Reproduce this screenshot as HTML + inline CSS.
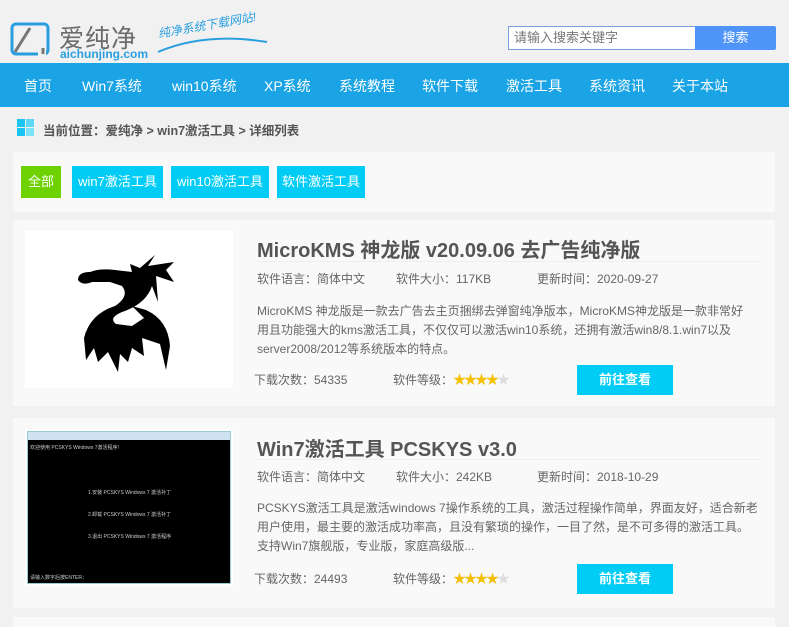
<!DOCTYPE html>
<html><head><meta charset="utf-8"><style>
*{margin:0;padding:0;box-sizing:border-box}
body{width:789px;height:620px;overflow:hidden;background:#f1f1f1;font-family:"Liberation Sans","Noto Sans CJK SC",sans-serif;position:relative;color:#555}
.a{position:absolute;white-space:nowrap}
.nav{position:absolute;left:0;top:63px;width:789px;height:44px;background:#1aa3e5}
.nav span{position:absolute;top:13px;color:#fff;font-size:14px}
.card{position:absolute;left:13px;width:762px;background:#f9f9f9}
.tag{position:absolute;top:166px;height:32px;line-height:32px;color:#fff;font-size:13px;text-align:center;background:#00ccf5}
.t{font-size:20px;font-weight:bold;color:#555}
.m{font-size:12px;color:#666}
.d{font-size:12px;color:#666;line-height:19px}
.btn{position:absolute;width:96px;height:30px;line-height:30px;background:#00ccf5;color:#fff;font-weight:bold;font-size:13px;text-align:center}
.star{font-size:13px;letter-spacing:-2px;position:relative;display:inline-block;color:#ddd}
.star b{position:absolute;left:0;top:0;width:3.5em;overflow:hidden;color:#f5c000;font-weight:normal}
</style></head><body>
<svg class="a" style="left:10px;top:22px" width="40" height="34" viewBox="0 0 40 34"><rect x="2" y="2" width="36" height="30" rx="4" fill="none" stroke="#2a9fe0" stroke-width="3"/><path d="M5 30 L20 6" stroke="#777" stroke-width="3"/><rect x="28" y="20" width="8" height="14" fill="#f1f1f1"/><path d="M33 26v6" stroke="#777" stroke-width="3"/></svg>
<div class="a" style="left:59px;top:19px;font-size:25px;color:#6b6b6b;letter-spacing:1px">爱纯净</div>
<div class="a" style="left:60px;top:47px;font-size:12px;color:#2a9fe0;font-weight:bold">aichunjing.com</div>
<div class="a" style="left:158px;top:25px;font-size:12px;color:#2a9fe0;font-style:italic;transform:rotate(-10deg);transform-origin:left">纯净系统下载网站!</div>
<svg class="a" style="left:155px;top:34px" width="115" height="20"><path d="M3 18 Q50 -2 112 8" stroke="#2a9fe0" stroke-width="2" fill="none"/></svg>
<div class="a" style="left:508px;top:26px;width:188px;height:24px;background:#fff;border:1px solid #7a9ee0;font-size:13px;color:#777;line-height:22px;padding-left:5px">请输入搜索关键字</div>
<div class="a" style="left:695px;top:26px;width:81px;height:24px;background:#4f94f8;color:#fff;font-size:13px;line-height:24px;text-align:center;border-radius:0 2px 2px 0">搜索</div>
<div class="nav"><span style="left:24px">首页</span><span style="left:82px">Win7系统</span><span style="left:172px">win10系统</span><span style="left:264px">XP系统</span><span style="left:339px">系统教程</span><span style="left:422px">软件下载</span><span style="left:506px">激活工具</span><span style="left:589px">系统资讯</span><span style="left:672px">关于本站</span></div>
<svg class="a" style="left:17px;top:119px" width="18" height="17"><rect x="0" y="0" width="8" height="8" fill="#1ac4f0"/><rect x="9" y="0" width="8" height="8" fill="#5ed8f8"/><rect x="0" y="9" width="8" height="8" fill="#1ac4f0"/><rect x="9" y="9" width="8" height="8" fill="#7de3fb"/></svg>
<div class="a" style="left:43px;top:120px;font-size:12.5px;font-weight:bold;color:#555">当前位置：爱纯净 &gt; win7激活工具 &gt; 详细列表</div>
<div class="card" style="top:152px;height:60px"></div>
<div class="tag" style="left:21px;width:40px;background:#6ed200">全部</div>
<div class="tag" style="left:72px;width:91px">win7激活工具</div>
<div class="tag" style="left:171px;width:98px">win10激活工具</div>
<div class="tag" style="left:277px;width:88px">软件激活工具</div>
<div class="card" style="top:220px;height:186px"></div>
<div class="a" style="left:25px;top:231px;width:208px;height:157px;background:#fff"></div>
<svg class="a" style="left:70px;top:250px" width="115" height="122" viewBox="0 0 115 122"><path d="M85 5 L70 18 L60 14 L62 22 L45 20 Q30 18 20 22 Q8 22 8 30 Q12 36 22 32 L40 32 L52 36 Q60 46 45 56 Q20 64 14 88 L16 110 L24 98 L28 112 L38 102 L48 122 L50 104 L58 112 L62 98 L74 106 L72 88 L90 94 L96 120 L100 96 Q98 70 76 60 L62 56 L74 68 L62 76 L46 74 Q38 68 52 62 Q76 54 82 36 L88 52 L86 26 L104 32 L96 20 L104 12 L78 16 Z" fill="#000"/></svg>
<div class="a t" style="left:257px;top:234px">MicroKMS 神龙版 v20.09.06 去广告纯净版</div>
<div class="a" style="left:256px;top:261px;width:505px;height:1px;background:#eee"></div>
<div class="a m" style="left:257px;top:270px">软件语言：简体中文</div>
<div class="a m" style="left:396px;top:270px">软件大小：117KB</div>
<div class="a m" style="left:537px;top:270px">更新时间：2020-09-27</div>
<div class="a d" style="left:257px;top:302px">MicroKMS 神龙版是一款去广告去主页捆绑去弹窗纯净版本，MicroKMS神龙版是一款非常好<br>用且功能强大的kms激活工具，不仅仅可以激活win10系统，还拥有激活win8/8.1.win7以及<br>server2008/2012等系统版本的特点。</div>
<div class="a m" style="left:254px;top:371px">下载次数：54335</div>
<div class="a m" style="left:393px;top:369px">软件等级：<span class="star">★★★★★<b>★★★★</b></span></div>
<div class="btn" style="left:577px;top:365px">前往查看</div>
<div class="card" style="top:418px;height:190px"></div>
<div class="a" style="left:25px;top:429px;width:208px;height:157px;background:#fff;padding:2px">
<div style="width:204px;height:153px;background:#000;position:relative;border:1px solid #9cc">
<div style="height:8px;background:#cfe3f1"></div>
<div style="position:absolute;left:2px;top:12px;color:#ccc;font-size:5px">欢迎使用 PCSKYS Windows 7激活程序!</div>
<div style="position:absolute;left:60px;top:50px;color:#ccc;font-size:5px;line-height:22px">1.安装 PCSKYS Windows 7 激活补丁<br>2.卸载 PCSKYS Windows 7 激活补丁<br>3.退出 PCSKYS Windows 7 激活程序</div>
<div style="position:absolute;left:2px;top:142px;color:#ccc;font-size:5px">请输入数字后按ENTER：</div></div></div>
<div class="a t" style="left:257px;top:433px">Win7激活工具 PCSKYS v3.0</div>
<div class="a" style="left:256px;top:459px;width:505px;height:1px;background:#eee"></div>
<div class="a m" style="left:257px;top:468px">软件语言：简体中文</div>
<div class="a m" style="left:396px;top:468px">软件大小：242KB</div>
<div class="a m" style="left:537px;top:468px">更新时间：2018-10-29</div>
<div class="a d" style="left:257px;top:499px">PCSKYS激活工具是激活windows 7操作系统的工具，激活过程操作简单，界面友好，适合新老<br>用户使用，最主要的激活成功率高，且没有繁琐的操作，一目了然，是不可多得的激活工具。<br>支持Win7旗舰版，专业版，家庭高级版...</div>
<div class="a m" style="left:254px;top:570px">下载次数：24493</div>
<div class="a m" style="left:393px;top:568px">软件等级：<span class="star">★★★★★<b>★★★★</b></span></div>
<div class="btn" style="left:577px;top:564px">前往查看</div>
<div class="card" style="top:617px;height:10px"></div>
</body></html>
